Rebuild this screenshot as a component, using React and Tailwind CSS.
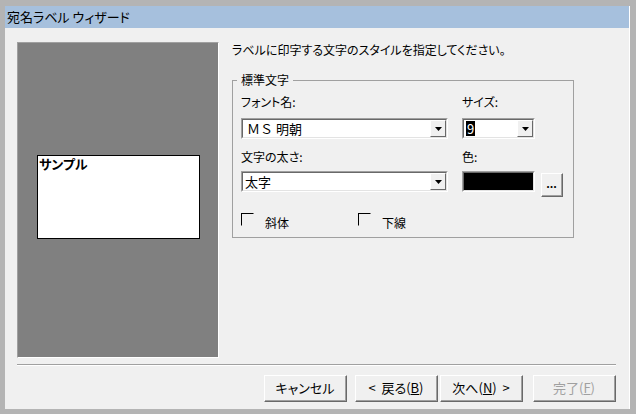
import React from 'react';

const font = "font-['Noto_Sans_CJK_JP','Noto_Sans',sans-serif] [font-feature-settings:'palt']";

function Arrow() {
  return (
    <div className="w-[16px] h-[17px] bg-[#f0f0f0] border border-t-white border-l-white border-r-[#696969] border-b-[#696969] flex items-center justify-center">
      <svg width="7" height="4" viewBox="0 0 7 4">
        <path d="M0 0h7L3.5 4z" fill="#000" />
      </svg>
    </div>
  );
}

function Sunken({ className, children }) {
  return (
    <div className={`border border-t-[#a0a0a0] border-l-[#a0a0a0] border-r-white border-b-white ${className}`}>
      <div className="w-full h-full border border-t-[#696969] border-l-[#696969] border-r-[#e3e3e3] border-b-[#e3e3e3]">
        {children}
      </div>
    </div>
  );
}

function Combo({ w, children }) {
  return (
    <Sunken className={`${w} h-[21px]`}>
      <div className="w-full h-full bg-white flex items-center justify-between">
        <div className="pl-[2px] text-[13px] leading-none flex items-center">{children}</div>
        <Arrow />
      </div>
    </Sunken>
  );
}

function Btn({ children, disabled }) {
  return (
    <div className="w-[83px] h-[27px] border border-t-white border-l-white border-r-[#696969] border-b-[#696969]">
      <div className={`w-full h-full border-r border-b border-[#a0a0a0] flex items-center justify-center text-[13px] whitespace-pre ${disabled ? 'text-[#a0a0a0]' : 'text-black'}`}>
        {children}
      </div>
    </div>
  );
}

function Check({ label }) {
  return (
    <div className="flex items-start">
      <div className="w-[13px] h-[13px] border border-t-black border-l-black border-r-[#f0f0f0] border-b-[#f0f0f0] bg-[#f0f0f0]" />
      <span className="ml-[11px] mt-[2px] text-[12px] leading-4">{label}</span>
    </div>
  );
}

export default function App() {
  return (
    <div className={`w-[636px] h-[414px] bg-[#b4b4b4] pt-[6px] pl-[5px] pr-[6px] pb-[5px] ${font} text-black`}>
      <div className="w-full h-full bg-[#f0f0f0] flex flex-col border-r border-white">
        <div className="h-[22px] bg-[#a6c0dd] flex items-center pl-[2px] text-[13px]">宛名ラベル ウィザード</div>

        <div className="flex pl-[12px] mt-[14px] h-[316px]">
          <div className="w-[202px] h-[316px] border border-t-[#a0a0a0] border-l-[#a0a0a0] border-r-white border-b-white bg-[#808080] flex flex-col justify-center">
            <div className="ml-[19px] mt-[-7px] w-[163px] h-[84px] bg-white border border-black">
              <div className="pl-[1px] text-[13px] leading-4 font-bold">サンプル</div>
            </div>
          </div>

          <div className="ml-[13px] flex flex-col">
            <div className="text-[12px] leading-4 h-[16px]">ラベルに印字する文字のスタイルを指定してください。</div>
            <fieldset className="mt-[14px] w-[342px] h-[166px] border border-[#a0a0a0] pl-[4px]">
              <legend className="px-[4px] text-[12px] leading-4">標準文字</legend>
              <div className="pl-[4px] flex">
                <div className="w-[207px] flex flex-col">
                  <div className="mt-[6px] text-[12px] leading-4">フォント名:</div>
                  <div className="mt-[8px]">
                    <Combo w="w-[207px]">
                      <span className="pl-[2px] [font-feature-settings:normal]">ＭＳ 明朝</span>
                    </Combo>
                  </div>
                  <div className="mt-[10px] text-[12px] leading-4">文字の太さ:</div>
                  <div className="mt-[6px]">
                    <Combo w="w-[207px]">太字</Combo>
                  </div>
                </div>
                <div className="ml-[14px] flex flex-col">
                  <div className="mt-[6px] text-[12px] leading-4">サイズ:</div>
                  <div className="mt-[8px]">
                    <Combo w="w-[73px]">
                      <span className="bg-black text-white px-[1px] h-[15px] flex items-center">9</span>
                    </Combo>
                  </div>
                  <div className="mt-[10px] text-[12px] leading-4">色:</div>
                  <div className="mt-[6px] flex items-start">
                    <Sunken className="w-[73px] h-[21px]">
                      <div className="w-full h-full bg-black" />
                    </Sunken>
                    <div className="ml-[6px] mt-[2px] w-[22px] h-[24px] border border-t-white border-l-white border-r-[#696969] border-b-[#696969]">
                      <div className="w-full h-full border-r border-b border-[#a0a0a0] flex items-center justify-center text-[11px] font-bold leading-none pb-[2px]">...</div>
                    </div>
                  </div>
                </div>
              </div>
              <div className="pl-[4px] mt-[16px] flex">
                <div className="w-[117px]">
                  <Check label="斜体" />
                </div>
                <Check label="下線" />
              </div>
            </fieldset>
          </div>
        </div>

        <div className="ml-[12px] mr-[13px] mt-[6px] h-[2px] border-t border-[#a0a0a0] border-b border-b-white" />

        <div className="flex justify-end mr-[13px] mt-[9px]">
          <Btn>キャンセル</Btn>
          <div className="ml-[8px]">
            <Btn>&lt;  戻る(<span className="underline">B</span>)</Btn>
          </div>
          <div className="ml-[2px]">
            <Btn>次へ(<span className="underline">N</span>)  &gt;</Btn>
          </div>
          <div className="ml-[10px]">
            <Btn disabled>完了(<span className="underline">F</span>)</Btn>
          </div>
        </div>
      </div>
    </div>
  );
}
